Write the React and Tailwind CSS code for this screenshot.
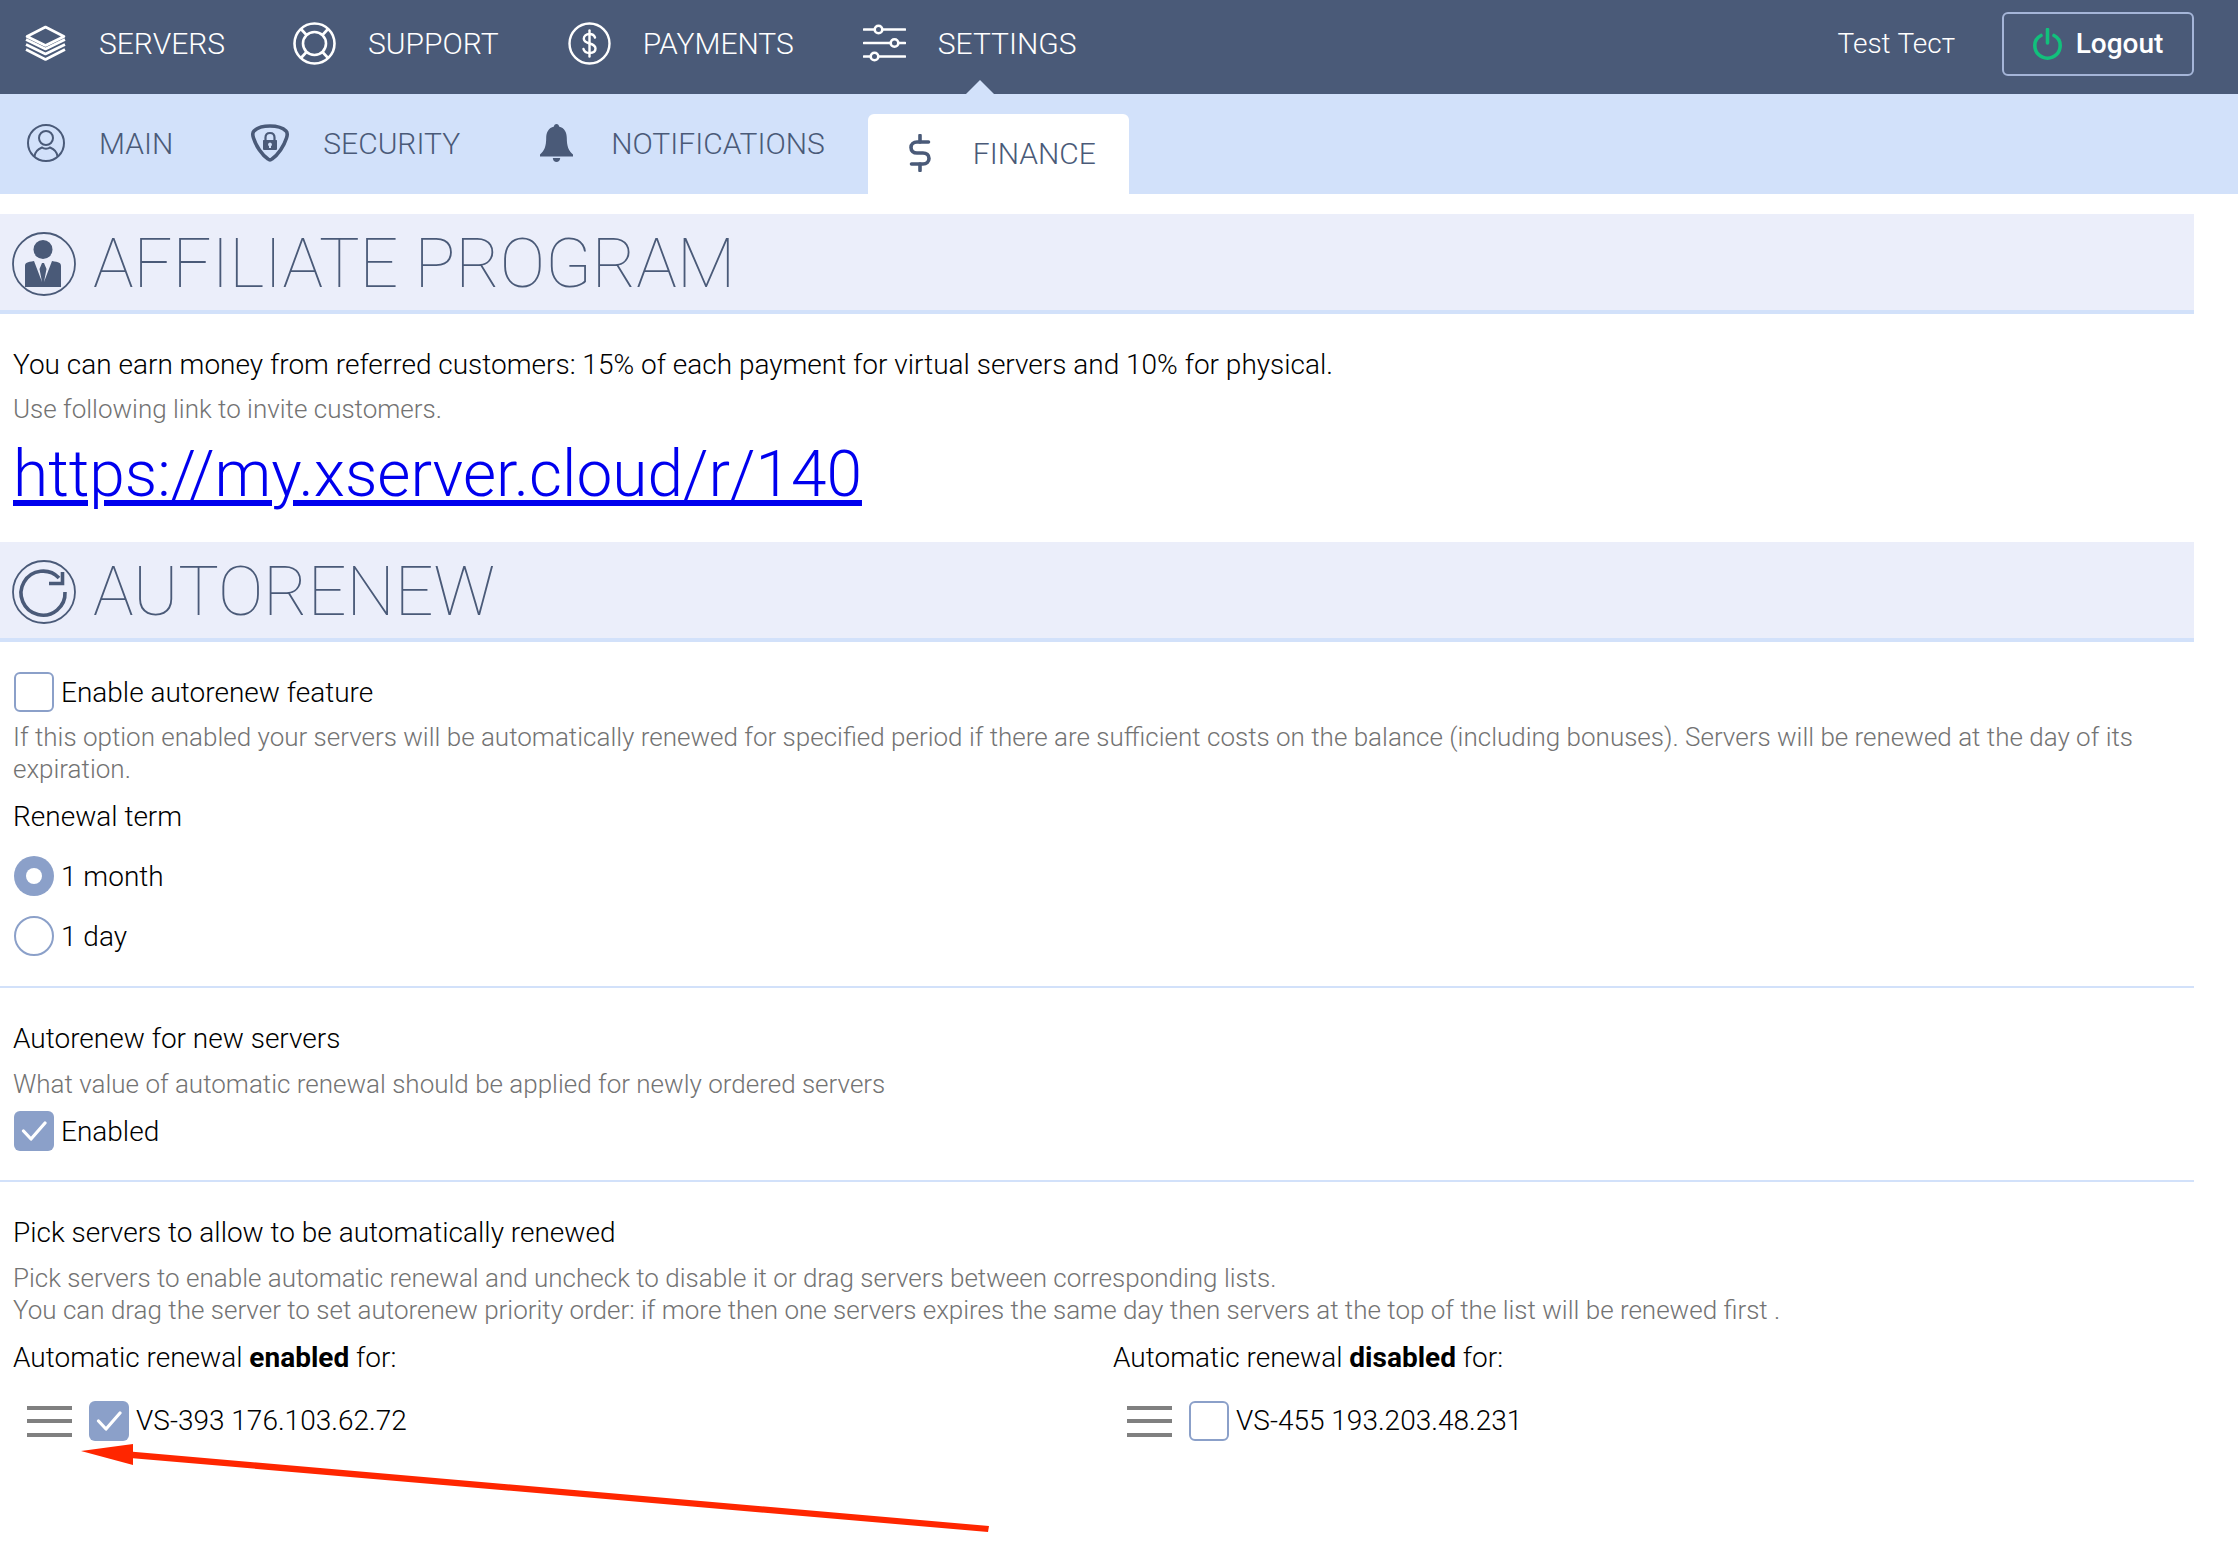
const ink = "#4a5a78";

function ServersIcon() {
  return (
    <svg width="43" height="37" viewBox="0 0 43 37" fill="none" stroke="#fff" strokeWidth="2.6" strokeLinejoin="round">
      <path d="M21.5 2 L40 11.5 L21.5 20.5 L3 11.5 Z" />
      <path d="M2 14.5 L21.5 24 L41 14.5" />
      <path d="M2 19.5 L21.5 29 L41 19.5" />
      <path d="M2 24.5 L21.5 34.5 L41 24.5" />
    </svg>
  );
}

function SupportIcon() {
  return (
    <svg width="43" height="43" viewBox="0 0 43 43" fill="none" stroke="#fff" strokeWidth="2.6">
      <circle cx="21.5" cy="21.5" r="20" />
      <circle cx="21.5" cy="21.5" r="11.5" />
      <path d="M8 7 L13.5 13 M35 7 L29.5 13 M8 36 L13.5 30 M35 36 L29.5 30" />
    </svg>
  );
}

function PaymentsIcon() {
  return (
    <svg width="43" height="43" viewBox="0 0 43 43" fill="none" stroke="#fff" strokeWidth="2.4" strokeLinecap="round">
      <circle cx="21.5" cy="21.5" r="20" />
      <path d="M27 15.5 C26 12.5 23.5 12 21.5 12 C18 12 15.8 14 15.8 16.8 C15.8 23 27.5 20 27.5 26.5 C27.5 29.5 25 31 21.5 31 C18.5 31 16.2 29.8 15.5 27" />
      <path d="M21.5 8.5 V34.5" />
    </svg>
  );
}

function SlidersIcon() {
  return (
    <svg width="43" height="38" viewBox="0 0 43 38" fill="none" stroke="#fff" strokeWidth="2.6" strokeLinecap="round">
      <path d="M1 5.5 H11 M20 5.5 H42" />
      <circle cx="15.5" cy="5.5" r="3.8" />
      <path d="M1 19 H27 M36 19 H42" />
      <circle cx="31.5" cy="19" r="3.8" />
      <path d="M1 32.5 H7 M16 32.5 H42" />
      <circle cx="11.5" cy="32.5" r="3.8" />
    </svg>
  );
}

function UserCircleIcon() {
  return (
    <svg width="38" height="38" viewBox="0 0 38 38" fill="none" stroke={ink} strokeWidth="2">
      <circle cx="19" cy="19" r="18" />
      <circle cx="19" cy="14" r="7" />
      <path d="M7.5 32.5 C8 26.5 12.5 24.5 15 23.5 C17 25 21 25 23 23.5 C25.5 24.5 30 26.5 30.5 32.5" />
    </svg>
  );
}

function ShieldLockIcon() {
  return (
    <svg width="38" height="38" viewBox="0 0 38 38">
      <path d="M19 2 C26 2 32 4 35 7 C37 9 36.5 11 35.5 14 C33 22 27 31 21 35 C19.5 36.3 18.5 36.3 17 35 C11 31 5 22 2.5 14 C1.5 11 1 9 3 7 C6 4 12 2 19 2 Z" fill="none" stroke={ink} strokeWidth="3.6" strokeLinejoin="round" />
      <path d="M14.5 18 V13.5 C14.5 10.5 16.5 9 19 9 C21.5 9 23.5 10.5 23.5 13.5 V18" fill="none" stroke={ink} strokeWidth="2.2" />
      <path d="M12.5 16 H25.5 Q26 16 26 17 V25 Q26 26 25 26 H13 Q12 26 12 25 V17 Q12 16 12.5 16 Z M19 18.5 a2 2 0 0 0 -1 3.7 V24 H20 V22.2 a2 2 0 0 0 -1 -3.7 Z" fill={ink} fillRule="evenodd" />
    </svg>
  );
}

function BellIcon() {
  return (
    <svg width="33" height="38" viewBox="0 0 33 38" fill={ink}>
      <path d="M16.5 0 C18 0 19 1 19 2.6 C24.5 4 26.8 8.5 26.8 14 C26.8 22 28.5 27 33 30.5 V32.5 H0 V30.5 C4.5 27 6.2 22 6.2 14 C6.2 8.5 8.5 4 14 2.6 C14 1 15 0 16.5 0 Z" />
      <path d="M12.8 34 H20.2 C20 36.5 18.5 38 16.5 38 C14.5 38 13 36.5 12.8 34 Z" />
    </svg>
  );
}

function DollarIcon() {
  return (
    <svg width="22" height="38" viewBox="0 0 22 38" fill="none" stroke={ink} strokeWidth="3.6" strokeLinecap="round">
      <path d="M11 1.5 V8 M11 30 V36.5" />
      <path d="M19.5 8 H8 C4.5 8 2 10.5 2 13.5 C2 17 4.5 19 8 19 H14 C17.5 19 20 21 20 24.5 C20 27.5 17.5 30 14 30 H2.5" />
    </svg>
  );
}

function PowerIcon() {
  return (
    <svg width="29" height="32" viewBox="0 0 29 32" fill="none" stroke="#12c07c" strokeWidth="3.6" strokeLinecap="round">
      <path d="M14.5 1.5 V15" />
      <path d="M8 7.5 C4 9.5 1.8 13.2 1.8 17.5 C1.8 24.8 7.5 30.2 14.5 30.2 C21.5 30.2 27.2 24.8 27.2 17.5 C27.2 13.2 25 9.5 21 7.5" />
    </svg>
  );
}

function SuitIcon() {
  return (
    <svg width="64" height="64" viewBox="0 0 64 64" fill={ink}>
      <circle cx="32" cy="32" r="31" fill="none" stroke={ink} strokeWidth="1.8" />
      <circle cx="31" cy="17.5" r="9.5" />
      <path d="M13 55 V34 C13 31 15 30 22 29 L30 50 L27.5 37 L30 31 H32 L34.5 37 L32 50 L40 29 C47 30 49 31 49 34 V55 Z" />
    </svg>
  );
}

function RenewIcon() {
  return (
    <svg width="64" height="64" viewBox="0 0 64 64" fill="none" stroke={ink}>
      <circle cx="32" cy="32" r="31" strokeWidth="1.8" />
      <path d="M53 32 A22 22 0 1 1 47 18" strokeWidth="3.6" />
      <path d="M50.5 12 V23.5 H37" strokeWidth="3.6" />
    </svg>
  );
}

function Check({ checked }) {
  if (checked) {
    return (
      <span className="flex h-10 w-10 flex-none items-center justify-center rounded-[6px] bg-[#8ba0c9]">
        <svg width="26" height="22" viewBox="0 0 26 22" fill="none" stroke="#fff" strokeWidth="3.2" strokeLinecap="round" strokeLinejoin="round">
          <path d="M2.5 11 L10 19 L24 3" />
        </svg>
      </span>
    );
  }
  return <span className="block h-10 w-10 flex-none rounded-[6px] border-2 border-[#8ba0c9] bg-white" />;
}

function Radio({ checked }) {
  if (checked) {
    return (
      <span className="flex h-10 w-10 flex-none items-center justify-center rounded-full bg-[#8ba0c9]">
        <span className="block h-[16px] w-[16px] rounded-full bg-white" />
      </span>
    );
  }
  return <span className="block h-10 w-10 flex-none rounded-full border-2 border-[#8ba0c9] bg-white" />;
}

function Grip() {
  return (
    <span className="flex h-[31px] w-[45px] flex-none flex-col justify-between">
      <span className="block h-[4px] bg-[#808080]" />
      <span className="block h-[4px] bg-[#808080]" />
      <span className="block h-[4px] bg-[#808080]" />
    </span>
  );
}

function SectionHead({ icon, title }) {
  return (
    <div className="flex h-[100px] items-center gap-[17px] border-b-4 border-[#d2e1fa] bg-[#ebeefa] pl-[12px]">
      <span className="mt-[4px] block">{icon}</span>
      <h2 className="pt-[4px] text-[68px] leading-none font-thin text-[#4a5a78]">{title}</h2>
    </div>
  );
}

function Hint({ className = "", children }) {
  return <p className={`-mb-[1px] pt-[1px] text-[26px] leading-[32px] font-light text-[#737373] ${className}`}>{children}</p>;
}

function Label({ className = "", children }) {
  return <p className={`-mb-[1px] pt-[1px] text-[28px] leading-[32px] font-light text-black ${className}`}>{children}</p>;
}

function ServerRow({ checked, name }) {
  return (
    <div className="mt-[28px] flex h-10 items-center pl-[14px]">
      <Grip />
      <span className="ml-[17px]"><Check checked={checked} /></span>
      <span className="ml-[7px] text-[28px] leading-[32px] font-light text-black">{name}</span>
    </div>
  );
}

export default function App() {
  return (
    <div className="relative min-h-[1556px] bg-white font-[Roboto,sans-serif]">
      {/* Main nav */}
      <header className="flex h-[94px] items-center bg-[#4a5a78] pb-[8px] text-[30px] font-light text-white">
        <div className="ml-[24px] flex items-center gap-[32px]"><ServersIcon /><span>SERVERS</span></div>
        <div className="ml-[68px] flex items-center gap-[32px]"><SupportIcon /><span>SUPPORT</span></div>
        <div className="ml-[69px] flex items-center gap-[32px]"><PaymentsIcon /><span>PAYMENTS</span></div>
        <div className="ml-[69px] flex items-center gap-[32px]">
          <SlidersIcon />
          <span>SETTINGS</span>
        </div>
        <div className="mt-[2px] mr-[44px] ml-auto flex items-center">
          <span className="text-[28px]">Test Тест</span>
          <button className="ml-[47px] flex h-[64px] w-[192px] items-center justify-center gap-[14px] rounded-[6px] border-2 border-[#a5b5d8] text-[28px] font-medium text-white">
            <PowerIcon />
            Logout
          </button>
        </div>
      </header>

      {/* Sub nav */}
      <nav className="relative flex h-[100px] bg-[#d2e1fa] text-[30px] font-light text-[#4a5a78]">
        <span className="absolute top-[-14px] left-[966px] h-0 w-0 border-x-[14px] border-b-[14px] border-x-transparent border-b-[#d2e1fa]" />
        <div className="ml-[27px] flex h-[98px] items-center gap-[34px] self-start"><UserCircleIcon /><span>MAIN</span></div>
        <div className="ml-[78px] flex h-[98px] items-center gap-[34px] self-start"><ShieldLockIcon /><span>SECURITY</span></div>
        <div className="ml-[80px] flex h-[98px] items-center gap-[38px] self-start"><BellIcon /><span>NOTIFICATIONS</span></div>
        <div className="mt-[20px] ml-[43px] flex w-[261px] items-center gap-[42px] rounded-t-[6px] bg-white pb-[2px] pl-[41px]"><DollarIcon /><span>FINANCE</span></div>
      </nav>

      <main className="mt-[20px] mr-[44px]">
        <SectionHead icon={<SuitIcon />} title="AFFILIATE PROGRAM" />
        <div className="px-[13px]">
          <Label className="mt-[34px]">You can earn money from referred customers: 15% of each payment for virtual servers and 10% for physical.</Label>
          <Hint className="mt-[12px]">Use following link to invite customers.</Hint>
          <a href="#" className="mt-[11px] block text-[64px] leading-[80px] font-light text-[#0000ee] underline">https://my.xserver.cloud/r/140</a>
        </div>

        <div className="mt-[27px]">
          <SectionHead icon={<RenewIcon />} title="AUTORENEW" />
        </div>
        <div className="px-[13px]">
          <div className="mt-[30px] flex h-10 items-center gap-[7px] pl-[1px]">
            <Check />
            <Label>Enable autorenew feature</Label>
          </div>
          <Hint className="mt-[8px]">If this option enabled your servers will be automatically renewed for specified period if there are sufficient costs on the balance (including bonuses). Servers will be renewed at the day of its expiration.</Hint>
          <Label className="mt-[16px]">Renewal term</Label>
          <div className="mt-[24px] flex h-10 items-center gap-[7px] pl-[1px]">
            <Radio checked />
            <Label>1 month</Label>
          </div>
          <div className="mt-[20px] flex h-10 items-center gap-[7px] pl-[1px]">
            <Radio />
            <Label>1 day</Label>
          </div>
        </div>
        <hr className="mt-[30px] border-t-2 border-[#d2e1fa]" />

        <div className="px-[13px]">
          <Label className="mt-[34px]">Autorenew for new servers</Label>
          <Hint className="mt-[13px]">What value of automatic renewal should be applied for newly ordered servers</Hint>
          <div className="mt-[12px] flex h-10 items-center gap-[7px] pl-[1px]">
            <Check checked />
            <Label>Enabled</Label>
          </div>
        </div>
        <hr className="mt-[29px] border-t-2 border-[#d2e1fa]" />

        <div className="px-[13px]">
          <Label className="mt-[34px]">Pick servers to allow to be automatically renewed</Label>
          <Hint className="mt-[13px]">Pick servers to enable automatic renewal and uncheck to disable it or drag servers between corresponding lists.</Hint>
          <Hint>You can drag the server to set autorenew priority order: if more then one servers expires the same day then servers at the top of the list will be renewed first .</Hint>
          <div className="mt-[16px] grid grid-cols-2 gap-x-[32px]">
            <div>
              <Label>Automatic renewal <b className="font-bold">enabled</b> for:</Label>
              <ServerRow checked name="VS-393 176.103.62.72" />
            </div>
            <div>
              <Label>Automatic renewal <b className="font-bold">disabled</b> for:</Label>
              <ServerRow name="VS-455 193.203.48.231" />
            </div>
          </div>
        </div>
      </main>

      {/* Red annotation arrow drawn over the page */}
      <svg className="absolute top-[1440px] left-0" width="1000" height="100" viewBox="0 0 1000 100" fill="#ff2600">
        <path d="M81 11 L133 4 L133 25 Z" />
        <path d="M130 11.5 L989 86 L988 92 L130 18 Z" />
      </svg>
    </div>
  );
}
